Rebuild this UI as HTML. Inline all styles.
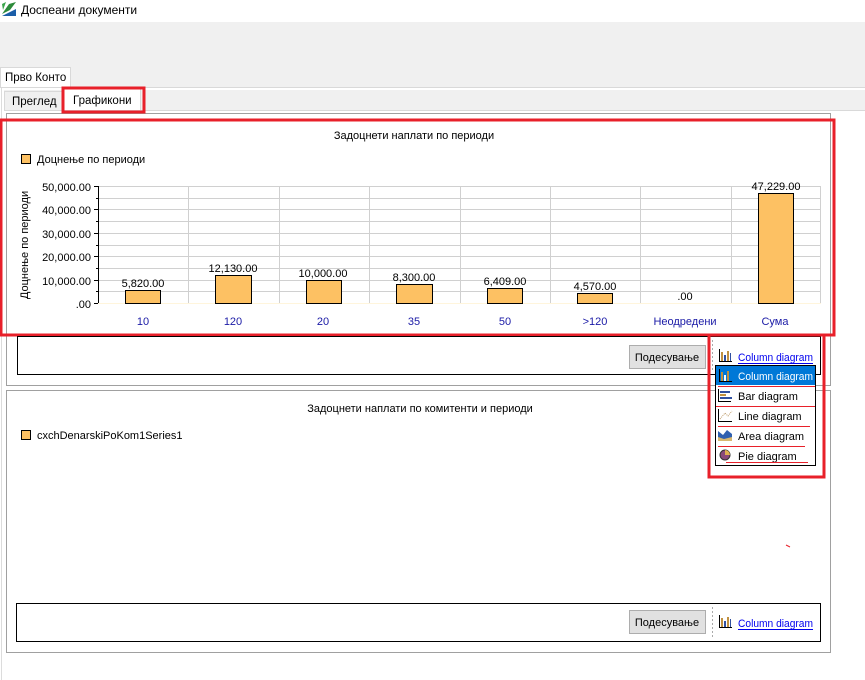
<!DOCTYPE html>
<html><head><meta charset="utf-8"><style>
html,body{margin:0;padding:0;width:865px;height:680px;overflow:hidden;background:#fff}
svg{display:block}
text{font-family:"Liberation Sans",sans-serif;font-size:11px;fill:#000}
text.b{fill:#1a1aa6}
text.l{fill:#0000ee}
text.w{fill:#fff}
</style></head><body>
<svg width="865" height="680" viewBox="0 0 865 680" xmlns="http://www.w3.org/2000/svg">
<rect x="0" y="0" width="865" height="22" fill="#fff"/>
<path d="M2 14 L9 4 L16 2 L10 10 Z" fill="#2c8a3a"/>
<path d="M2 16 L16 9 L16 16 Z" fill="#1b5ea8"/>
<path d="M2 4 L6 2 L3 10 Z" fill="#3aa54a"/>
<text x="21" y="14" style="font-size:12px">Доспеани документи</text>
<rect x="0" y="22" width="865" height="65" fill="#f0f0f0"/>
<rect x="0.5" y="67.5" width="70" height="20" fill="#fff" stroke="#d9d9d9"/>
<text x="5" y="81" style="font-size:11.5px">Прво Конто</text>
<line x1="70" y1="87.5" x2="865" y2="87.5" stroke="#d9d9d9"/>
<rect x="0" y="88" width="865" height="592" fill="#fff"/>
<line x1="1.5" y1="88" x2="1.5" y2="680" stroke="#dcdcdc"/>
<rect x="4" y="90" width="861" height="21" fill="#f0f0f0"/>
<rect x="4.5" y="91.5" width="58" height="19" fill="#f0f0f0" stroke="#d9d9d9"/>
<text x="12" y="105" style="font-size:11.5px">Преглед</text>
<rect x="62.5" y="88.5" width="78" height="22" fill="#fff" stroke="#d9d9d9"/>
<text x="73" y="104" style="font-size:11.5px">Графикони</text>
<line x1="4" y1="110.5" x2="865" y2="110.5" stroke="#d9d9d9"/>
<rect x="6.5" y="113.5" width="824" height="272" fill="#fff" stroke="#a0a0a0"/>
<text x="414" y="139" text-anchor="middle">Задоцнети наплати по периоди</text>
<rect x="21.5" y="154.5" width="9" height="9" fill="#fdc163" stroke="#000"/>
<text x="37" y="163">Доцнење по периоди</text>
<g stroke="#d0d0d0">
<line x1="98" y1="186.5" x2="821" y2="186.5"/><line x1="98" y1="198.5" x2="821" y2="198.5"/>
<line x1="98" y1="209.5" x2="821" y2="209.5"/><line x1="98" y1="221.5" x2="821" y2="221.5"/>
<line x1="98" y1="233.5" x2="821" y2="233.5"/><line x1="98" y1="245.5" x2="821" y2="245.5"/>
<line x1="98" y1="256.5" x2="821" y2="256.5"/><line x1="98" y1="268.5" x2="821" y2="268.5"/>
<line x1="98" y1="280.5" x2="821" y2="280.5"/><line x1="98" y1="291.5" x2="821" y2="291.5"/>
<line x1="188.5" y1="186" x2="188.5" y2="303"/><line x1="279.5" y1="186" x2="279.5" y2="303"/>
<line x1="369.5" y1="186" x2="369.5" y2="303"/><line x1="460.5" y1="186" x2="460.5" y2="303"/>
<line x1="550.5" y1="186" x2="550.5" y2="303"/><line x1="640.5" y1="186" x2="640.5" y2="303"/>
<line x1="731.5" y1="186" x2="731.5" y2="303"/><line x1="820.5" y1="186" x2="820.5" y2="303"/>
</g>
<line x1="98.5" y1="186" x2="98.5" y2="304" stroke="#000"/>
<g stroke="#000"><line x1="94" y1="186.5" x2="98" y2="186.5"/><line x1="94" y1="209.5" x2="98" y2="209.5"/><line x1="94" y1="233.5" x2="98" y2="233.5"/><line x1="94" y1="256.5" x2="98" y2="256.5"/><line x1="94" y1="280.5" x2="98" y2="280.5"/><line x1="94" y1="303.5" x2="98" y2="303.5"/>
<line x1="96" y1="198.5" x2="98" y2="198.5"/><line x1="96" y1="221.5" x2="98" y2="221.5"/><line x1="96" y1="245.5" x2="98" y2="245.5"/><line x1="96" y1="268.5" x2="98" y2="268.5"/><line x1="96" y1="291.5" x2="98" y2="291.5"/></g>
<line x1="98" y1="303.5" x2="821" y2="303.5" stroke="#fff5dc"/>
<g text-anchor="end" style="font-size:11.5px"><text x="91" y="191">50,000.00</text><text x="91" y="214">40,000.00</text><text x="91" y="238">30,000.00</text><text x="91" y="261">20,000.00</text><text x="91" y="285">10,000.00</text><text x="91" y="308">.00</text></g>
<text transform="translate(28,245) rotate(-90)" text-anchor="middle">Доцнење по периоди</text>
<g fill="#fdc163" stroke="#000">
<rect x="125.5" y="290.5" width="35" height="13"/>
<rect x="215.5" y="275.5" width="36" height="28"/>
<rect x="306.5" y="280.5" width="35" height="23"/>
<rect x="396.5" y="284.5" width="36" height="19"/>
<rect x="487.5" y="288.5" width="35" height="15"/>
<rect x="577.5" y="293.5" width="35" height="10"/>
<rect x="758.5" y="193.5" width="35" height="110"/>
</g>
<g text-anchor="middle">
<text x="143" y="287">5,820.00</text><text x="233" y="272">12,130.00</text><text x="323" y="277">10,000.00</text>
<text x="414" y="281">8,300.00</text><text x="505" y="285">6,409.00</text><text x="595" y="290">4,570.00</text>
<text x="685" y="300">.00</text><text x="776" y="190">47,229.00</text>
</g>
<g text-anchor="middle"><text class="b" x="143" y="325">10</text><text class="b" x="233" y="325">120</text><text class="b" x="323" y="325">20</text><text class="b" x="414" y="325">35</text><text class="b" x="505" y="325">50</text><text class="b" x="595" y="325">&gt;120</text><text class="b" x="685" y="325">Неодредени</text><text class="b" x="775" y="325">Сума</text></g>
<rect x="1" y="120" width="833" height="215" fill="none" stroke="#e8202a" stroke-width="3"/>
<rect x="17.5" y="336.5" width="803" height="38" fill="#fff" stroke="#000"/>
<rect x="629.5" y="345.5" width="76" height="23" fill="#e1e1e1" stroke="#adadad"/>
<text x="667" y="361" text-anchor="middle">Подесување</text>
<line x1="712.5" y1="340" x2="712.5" y2="372" stroke="#aaa" stroke-dasharray="2,2"/>
<g><rect x="719" y="349" width="1" height="13" fill="#000"/><rect x="719" y="361" width="13" height="1" fill="#000"/><rect x="721" y="352" width="2" height="9" fill="#c09040"/><rect x="724" y="355" width="2" height="6" fill="#3050a0"/><rect x="727" y="351" width="2" height="10" fill="#c09040"/><rect x="730" y="353" width="1" height="8" fill="#3050a0"/></g>
<text class="l" x="738" y="361" textLength="75" lengthAdjust="spacingAndGlyphs">Column diagram</text>
<line x1="738" y1="363.5" x2="813" y2="363.5" stroke="#0000ee"/>
<rect x="6.5" y="390.5" width="824" height="262" fill="#fff" stroke="#a0a0a0"/>
<text x="420" y="412" text-anchor="middle">Задоцнети наплати по комитенти и периоди</text>
<rect x="21.5" y="430.5" width="9" height="9" fill="#fdc163" stroke="#000"/>
<text x="37" y="439">cxchDenarskiPoKom1Series1</text>
<path d="M786 545 L790 547" stroke="#e8202a"/>
<rect x="16.5" y="603.5" width="804" height="38" fill="#fff" stroke="#000"/>
<rect x="629.5" y="610.5" width="76" height="23" fill="#e1e1e1" stroke="#adadad"/>
<text x="667" y="626" text-anchor="middle">Подесување</text>
<line x1="712.5" y1="607" x2="712.5" y2="638" stroke="#aaa" stroke-dasharray="2,2"/>
<g><rect x="719" y="615" width="1" height="13" fill="#000"/><rect x="719" y="627" width="13" height="1" fill="#000"/><rect x="721" y="618" width="2" height="9" fill="#c09040"/><rect x="724" y="621" width="2" height="6" fill="#3050a0"/><rect x="727" y="617" width="2" height="10" fill="#c09040"/><rect x="730" y="619" width="1" height="8" fill="#3050a0"/></g>
<text class="l" x="738" y="627" textLength="75" lengthAdjust="spacingAndGlyphs">Column diagram</text>
<line x1="738" y1="629.5" x2="813" y2="629.5" stroke="#0000ee"/>
<rect x="715.5" y="365.5" width="100" height="100" fill="#fff" stroke="#000"/>
<rect x="716" y="366" width="99" height="19" fill="#0078d7"/>
<g><rect x="719" y="369" width="1" height="13" fill="#000"/><rect x="719" y="381" width="13" height="1" fill="#000"/><rect x="721" y="372" width="2" height="9" fill="#c09040"/><rect x="724" y="375" width="2" height="6" fill="#fff"/><rect x="727" y="371" width="2" height="10" fill="#c09040"/></g>
<text class="w" x="738" y="380" textLength="75" lengthAdjust="spacingAndGlyphs">Column diagram</text>
<g><rect x="718" y="389" width="1" height="13" fill="#000"/><rect x="720" y="391" width="10" height="2" fill="#3050a0"/><rect x="720" y="394" width="6" height="2" fill="#c09040"/><rect x="720" y="397" width="12" height="2" fill="#3050a0"/><rect x="718" y="401" width="13" height="1" fill="#000"/></g>
<text x="738" y="400">Bar diagram</text>
<g><rect x="718" y="409" width="1" height="13" fill="#000"/><rect x="718" y="421" width="14" height="1" fill="#000"/><path d="M720 419 L725 413 L728 416 L732 411" stroke="#c0a070" fill="none" stroke-dasharray="1,1"/></g>
<text x="738" y="420">Line diagram</text>
<g><path d="M718 441 L718 431 L723 435 L727 430 L732 434 L732 441 Z" fill="#3060b0"/><path d="M718 441 L718 437 L724 439 L732 437 L732 441 Z" fill="#d8b870"/></g>
<text x="738" y="440">Area diagram</text>
<circle cx="725" cy="455" r="5" fill="#8a4a7a" stroke="#333"/><path d="M725 455 L725 450 A5 5 0 0 1 730 455 Z" fill="#e0b050"/>
<text x="738" y="460">Pie diagram</text>
<g stroke="#e8202a"><line x1="718" y1="386.5" x2="815" y2="386.5"/><line x1="716" y1="406.5" x2="815" y2="406.5"/><line x1="718" y1="426.5" x2="810" y2="426.5"/><line x1="718" y1="446.5" x2="805" y2="446.5"/><line x1="726" y1="462.5" x2="808" y2="462.5"/></g>
<rect x="709" y="335" width="115" height="142" fill="none" stroke="#e8202a" stroke-width="3"/>
<rect x="63" y="88" width="81" height="24" fill="none" stroke="#e8202a" stroke-width="3"/>
</svg>
</body></html>
